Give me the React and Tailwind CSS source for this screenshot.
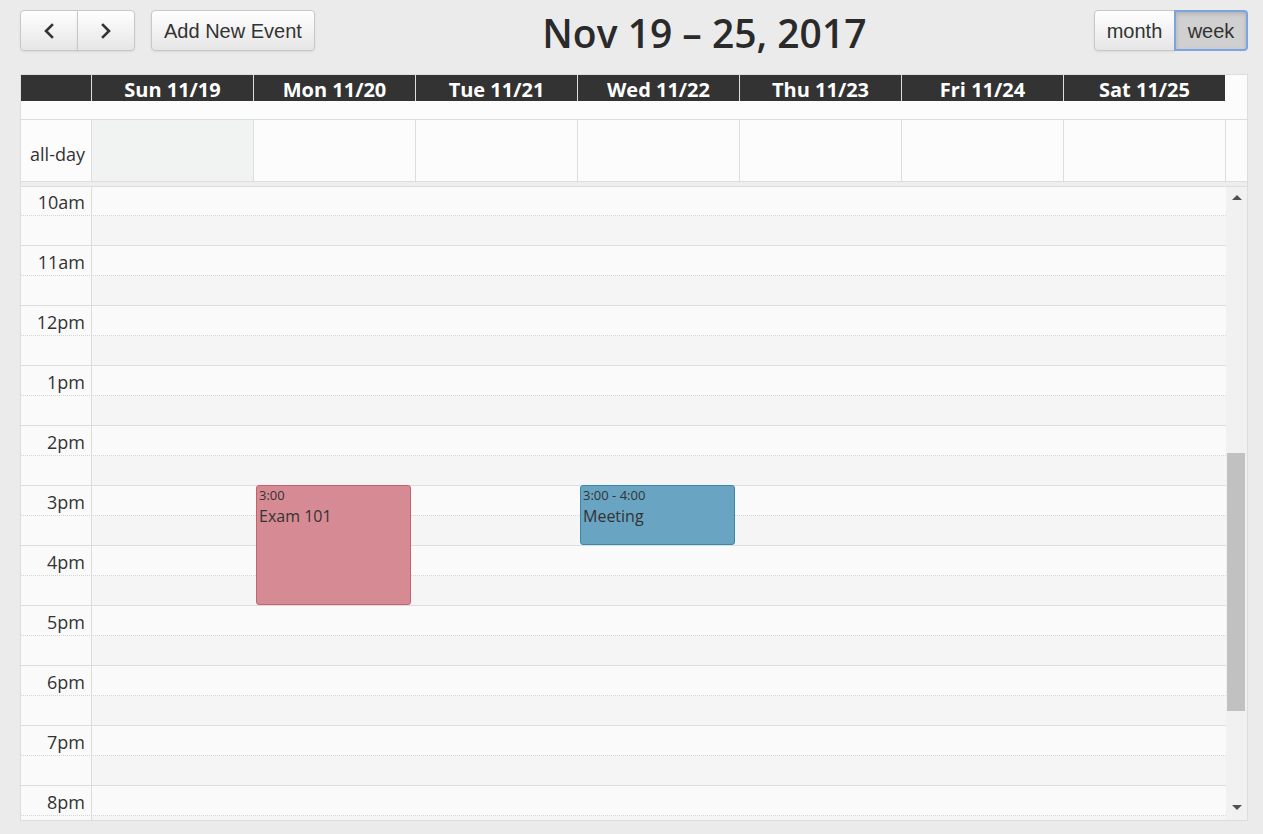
import React from 'react';

const DIAS = ['Sun 11/19', 'Mon 11/20', 'Tue 11/21', 'Wed 11/22', 'Thu 11/23', 'Fri 11/24', 'Sat 11/25'];
const HORAS = ['10am', '11am', '12pm', '1pm', '2pm', '3pm', '4pm', '5pm', '6pm', '7pm', '8pm'];

const fuente = { fontFamily: '"Open Sans", "Noto Sans", sans-serif' };

function Chevron({ dir }) {
  return (
    <svg width="14" height="18" viewBox="0 0 14 18" fill="none" stroke="#333" strokeWidth="2.6" strokeLinecap="square">
      {dir === 'left' ? <polyline points="10,3 4,9 10,15" /> : <polyline points="4,3 10,9 4,15" />}
    </svg>
  );
}

const btn = 'h-[41px] border border-[#c8c8c8] bg-gradient-to-b from-white to-[#e6e6e6] text-[#333] text-[20px] shadow-[inset_0_1px_0_rgba(255,255,255,0.2),0_1px_2px_rgba(0,0,0,0.08)] flex items-center justify-center';

function Toolbar() {
  return (
    <div className="flex items-center h-[41px]" style={{ fontFamily: '"Liberation Sans", Arial, sans-serif' }}>
      <div className="flex">
        <button className={`${btn} w-[58px] rounded-l-[4px]`}><Chevron dir="left" /></button>
        <button className={`${btn} w-[58px] -ml-px rounded-r-[4px]`}><Chevron dir="right" /></button>
      </div>
      <button className={`${btn} ml-[16px] px-[12px] rounded-[4px]`}>Add New Event</button>
      <div className="flex-1 text-center pt-[4px]">
        <h2 className="text-[39px] font-semibold text-[#2a2a2a] leading-none" style={fuente}>Nov 19 – 25, 2017</h2>
      </div>
      <div className="flex">
        <button className={`${btn} w-[81px] rounded-l-[4px]`}>month</button>
        <button className="h-[41px] w-[74px] -ml-px rounded-r-[4px] border-2 border-[#7ba4e0] bg-[#d0d0d0] text-[#333] text-[20px] shadow-[inset_0_2px_4px_rgba(0,0,0,0.15)]">week</button>
      </div>
    </div>
  );
}

function Evento({ col, top, height, time, title, bg, border }) {
  return (
    <div
      className="absolute rounded-[3px] border px-[2px] text-[#333] leading-tight"
      style={{ left: 162 * col + 2, width: 155, top, height, background: bg, borderColor: border }}
    >
      <div className="text-[13px] mt-[1px]">{time}</div>
      <div className="text-[16px] mt-[3px]">{title}</div>
    </div>
  );
}

function Rejilla() {
  return (
    <div className="relative h-[634px] overflow-hidden flex border-l border-[#ddd] border-b border-b-[#ddd] border-r border-r-[#ddd]">
      <div className="w-[1205px] -mt-[1px] relative">
        {HORAS.map(h => (
          <div key={h}>
            <div className="h-[30px] flex bg-[#fafafa] border-b border-dotted border-[#d4d4d4]">
              <div className="w-[71px] border-r border-[#ddd] text-right pr-[6px] pt-[1px] text-[18px] text-[#333] leading-[30px]">{h}</div>
            </div>
            <div className="h-[30px] flex bg-[#f5f5f5] border-b border-[#ddd]">
              <div className="w-[71px] border-r border-[#ddd] bg-[#fafafa]" />
            </div>
          </div>
        ))}
        <div className="absolute inset-y-0 left-[71px] right-0">
          <Evento col={1} top={299} height={120} time="3:00" title="Exam 101" bg="#d68a94" border="#c8616f" />
          <Evento col={3} top={299} height={60} time="3:00 - 4:00" title="Meeting" bg="#69a4c2" border="#3a87ad" />
        </div>
      </div>
      {/* barra de desplazamiento */}
      <div className="w-[21px] bg-[#f1f1f1] relative">
        <div className="absolute left-[6px] top-[8px] w-0 h-0 border-l-[5px] border-r-[5px] border-b-[5px] border-l-transparent border-r-transparent border-b-[#505050]" />
        <div className="absolute left-[1px] right-[2px] top-[266px] h-[258px] bg-[#c1c1c1]" />
        <div className="absolute left-[6px] bottom-[10px] w-0 h-0 border-l-[5px] border-r-[5px] border-t-[5px] border-l-transparent border-r-transparent border-t-[#505050]" />
      </div>
    </div>
  );
}

export default function App() {
  return (
    <div className="w-[1263px] h-[834px] bg-[#ebebeb] pt-[10px] px-[20px] overflow-hidden" style={fuente}>
      <div className="w-[1228px]">
        <Toolbar />
        <div className="mt-[23px]">
          {/* cabecera */}
          <div className="border border-[#ddd] bg-[#fcfcfc]">
            <div className="flex">
              <div className="w-[70px] bg-[#333] h-[26px]" />
              {DIAS.map(d => (
                <div key={d} className="w-[162px] h-[26px] bg-[#333] border-l border-[#ddd] text-white font-bold text-[20px] leading-[26px] pt-[2px] text-center">{d}</div>
              ))}
              <div className="flex-1" />
            </div>
            <div className="h-[19px] border-b border-[#ddd]" />
            <div className="flex h-[61px]">
              <div className="w-[70px] text-right pr-[6px] text-[18px] text-[#333] flex items-center justify-end pt-[7px]">all-day</div>
              {DIAS.map((d, i) => (
                <div key={d} className={`w-[162px] border-l border-[#ddd] ${i === 0 ? 'bg-[#f1f2f2]' : ''}`} />
              ))}
              <div className="flex-1 border-l border-[#ddd]" />
            </div>
          </div>
          <div className="h-[5px] bg-[#eee] border-x border-[#ddd] border-b border-b-[#ddd]" />
          <Rejilla />
        </div>
      </div>
    </div>
  );
}
